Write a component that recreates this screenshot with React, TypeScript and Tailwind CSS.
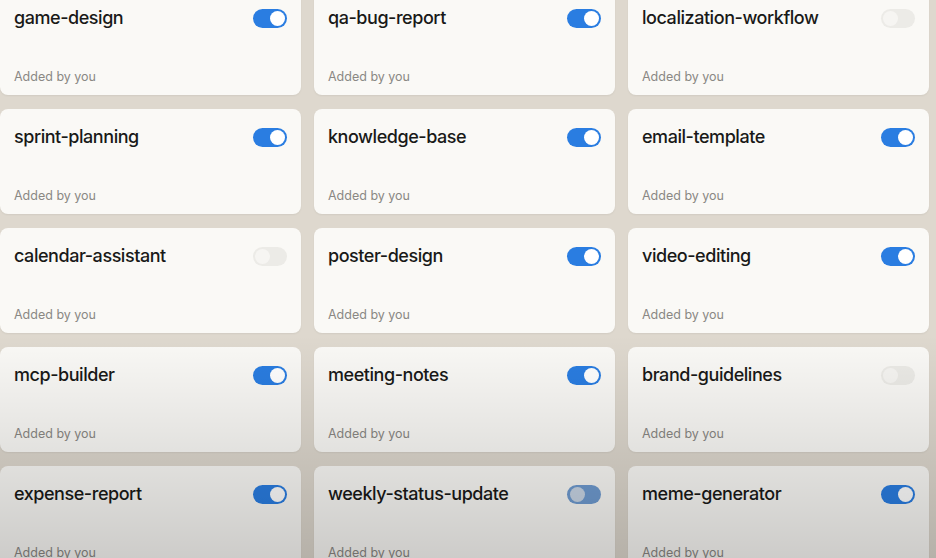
import React from 'react';

type Skill = {
  name: string;
  state: 'on' | 'off' | 'mid';
};

const skills: Skill[] = [
  { name: 'game-design', state: 'on' },
  { name: 'qa-bug-report', state: 'on' },
  { name: 'localization-workflow', state: 'off' },
  { name: 'sprint-planning', state: 'on' },
  { name: 'knowledge-base', state: 'on' },
  { name: 'email-template', state: 'on' },
  { name: 'calendar-assistant', state: 'off' },
  { name: 'poster-design', state: 'on' },
  { name: 'video-editing', state: 'on' },
  { name: 'mcp-builder', state: 'on' },
  { name: 'meeting-notes', state: 'on' },
  { name: 'brand-guidelines', state: 'off' },
  { name: 'expense-report', state: 'on' },
  { name: 'weekly-status-update', state: 'mid' },
  { name: 'meme-generator', state: 'on' },
];

const Toggle: React.FC<{ state: Skill['state'] }> = ({ state }) => {
  if (state === 'on') {
    return (
      <div className="flex h-[19px] w-[34px] items-center justify-end rounded-full bg-[#2a7de1] pr-[2px]">
        <div className="h-[15px] w-[15px] rounded-full bg-white" />
      </div>
    );
  }
  if (state === 'mid') {
    return (
      <div className="flex h-[19px] w-[34px] items-center rounded-full bg-[#6f9bd0] pl-[3px]">
        <div className="h-[15px] w-[15px] rounded-full bg-[#dfe4ea]/80" />
      </div>
    );
  }
  return (
    <div className="flex h-[19px] w-[34px] items-center rounded-full bg-[#ecebe7] pl-[2px]">
      <div className="h-[15px] w-[15px] rounded-full bg-[#f6f5f2]" />
    </div>
  );
};

const SkillCard: React.FC<{ skill: Skill }> = ({ skill }) => (
  <div className="flex h-[105px] flex-col justify-between rounded-[8px] bg-[#faf9f6] px-[14px] pb-[9px] pt-[16px] shadow-[0_1px_2px_rgba(0,0,0,0.06)]">
    <div className="flex items-center justify-between">
      <span className="text-[18px] font-medium leading-[24px] tracking-[-0.45px] text-[#191918]">{skill.name}</span>
      <Toggle state={skill.state} />
    </div>
    <span className="text-[12.5px] leading-[18px] text-[#8a8884]">Added by you</span>
  </div>
);

export default function App() {
  return (
    <div
      className="relative h-[558px] w-[936px] overflow-hidden bg-[#ded8ce]"
      style={{ fontFamily: 'Inter, "Noto Sans", sans-serif' }}
    >
      <div className="-mt-[10px] grid grid-cols-[301px_301px_301px] gap-x-[13px] gap-y-[14px]">
        {skills.map((s) => (
          <SkillCard key={s.name} skill={s} />
        ))}
      </div>
      <div className="pointer-events-none absolute inset-0 bg-gradient-to-b from-transparent from-[60%] to-black/18" />
    </div>
  );
}
